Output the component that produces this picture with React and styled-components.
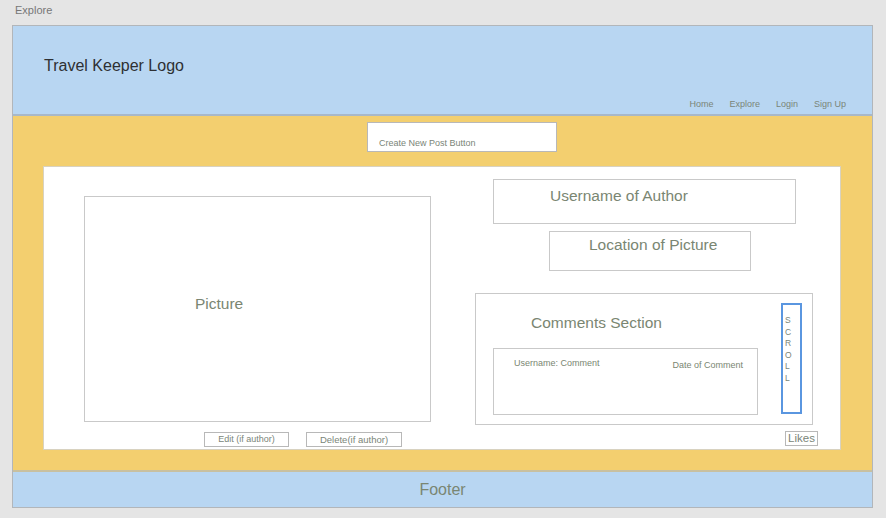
import React from 'react'
import styled, { createGlobalStyle } from 'styled-components'

const Global = createGlobalStyle`
  html, body {
    margin: 0;
    padding: 0;
    background: #e5e5e5;
    font-family: "Liberation Sans", Arial, sans-serif;
  }
`

const Page = styled.div`
  width: 886px;
  height: 518px;
  box-sizing: border-box;
  padding: 4px 13px 0 12px;
  display: flex;
  flex-direction: column;
`

const PageLabel = styled.div`
  font-size: 11px;
  color: #777;
  height: 21px;
  line-height: 12px;
  padding-left: 3px;
`

const Frame = styled.div`
  display: flex;
  flex-direction: column;
  border: 1px solid #b2b6ba;
  height: 483px;
  box-sizing: border-box;
`

const Header = styled.div`
  height: 90px;
  flex-shrink: 0;
  background: #b8d6f2;
  border-bottom: 2px solid #a8b8c8;
  box-sizing: border-box;
  display: flex;
  flex-direction: column;
  justify-content: space-between;
  padding: 31px 26px 5px 31px;
`

const Logo = styled.div`
  font-size: 16px;
  color: #2e3033;
`

const Nav = styled.nav`
  display: flex;
  justify-content: flex-end;
  gap: 16px;
`

const NavLink = styled.a`
  font-size: 9px;
  color: #7a8578;
  text-decoration: none;
`

const Main = styled.div`
  flex: 1;
  background: #f3cf6f;
  display: flex;
  flex-direction: column;
  padding: 6px 31px 20px 30px;
`

const CreateButton = styled.div`
  width: 190px;
  height: 30px;
  box-sizing: border-box;
  margin-left: 324px;
  background: #fff;
  border: 1px solid #b8b8b8;
  font-size: 9px;
  color: #7a8578;
  padding: 15px 0 0 11px;
`

const Card = styled.div`
  margin-top: 14px;
  height: 284px;
  box-sizing: border-box;
  background: #fff;
  border: 1px solid #d8d2c0;
  display: flex;
`

const LeftColumn = styled.div`
  width: 432px;
  box-sizing: border-box;
  padding: 29px 0 0 40px;
  display: flex;
  flex-direction: column;
`

const Box = styled.div`
  box-sizing: border-box;
  width: ${({ w }) => w}px;
  height: ${({ h }) => h}px;
  border: 1px solid #c9c9c9;
  background: #fff;
`

const Label = styled.div`
  font-size: ${({ size = 15.5 }) => size}px;
  color: #7a8672;
  padding: ${({ pad = '0' }) => pad};
`

const PictureBox = styled(Box)`
  display: flex;
  align-items: center;
`

const ButtonRow = styled.div`
  display: flex;
  gap: 17px;
  margin: 10px 0 0 120px;
`

const SmallButton = styled.div`
  box-sizing: border-box;
  width: ${({ w }) => w}px;
  height: 15px;
  border: 1px solid #b8b8b8;
  font-size: ${({ size = 9 }) => size}px;
  color: #7a8578;
  text-align: center;
  line-height: ${({ lh = 12 }) => lh}px;
`

const RightColumn = styled.div`
  flex: 1;
  display: flex;
  flex-direction: column;
  padding-top: 12px;
`

const Offset = styled.div`
  margin: ${({ m }) => m};
`

const CommentsBox = styled(Box)`
  display: flex;
  justify-content: space-between;
  padding: 9px 10px 0 17px;
`

const CommentsMain = styled.div`
  display: flex;
  flex-direction: column;
`

const CommentItem = styled(Box)`
  display: flex;
  justify-content: space-between;
  margin-top: 16px;
  padding: 9px 14px 0 20px;
`

const Scroll = styled.div`
  box-sizing: border-box;
  width: 21px;
  height: 111px;
  border: 2px solid #5a96e0;
  padding: 10px 0 0 2px;
  font-size: 8.5px;
  line-height: 11.5px;
  color: #7a8578;
  display: flex;
  flex-direction: column;
`

const Likes = styled.div`
  box-sizing: border-box;
  width: 33px;
  height: 15px;
  border: 1px solid #b8b8b8;
  font-size: 11.5px;
  color: #7a8578;
  text-align: center;
  line-height: 13px;
  margin: 6px 0 0 309px;
`

const Footer = styled.div`
  height: 37px;
  flex-shrink: 0;
  background: #b8d6f2;
  border-top: 2px solid #c8c0a0;
  box-sizing: border-box;
  display: flex;
  align-items: center;
  justify-content: center;
  font-size: 16px;
  color: #7a8672;
`

export default function App() {
  return (
    <>
      <Global />
      <Page>
        <PageLabel>Explore</PageLabel>
        <Frame>
          <Header>
            <Logo>Travel Keeper Logo</Logo>
            <Nav>
              <NavLink>Home</NavLink>
              <NavLink>Explore</NavLink>
              <NavLink>Login</NavLink>
              <NavLink>Sign Up</NavLink>
            </Nav>
          </Header>
          <Main>
            <CreateButton>Create New Post Button</CreateButton>
            <Card>
              <LeftColumn>
                <PictureBox w={347} h={226}>
                  <Label pad="0 0 11px 110px">Picture</Label>
                </PictureBox>
                <ButtonRow>
                  <SmallButton w={85}>Edit (if author)</SmallButton>
                  <SmallButton w={96} size={9.5} lh={14}>Delete(if author)</SmallButton>
                </ButtonRow>
              </LeftColumn>
              <RightColumn>
                <Offset m="0 0 0 17px">
                  <Box w={303} h={45}>
                    <Label pad="7px 0 0 56px">Username of Author</Label>
                  </Box>
                </Offset>
                <Offset m="7px 0 0 73px">
                  <Box w={202} h={40}>
                    <Label pad="4px 0 0 39px">Location of Picture</Label>
                  </Box>
                </Offset>
                <Offset m="22px 0 0 -1px">
                  <CommentsBox w={338} h={132}>
                    <CommentsMain>
                      <Label pad="11px 0 0 38px">Comments Section</Label>
                      <CommentItem w={265} h={67}>
                        <Label size={9}>Username: Comment</Label>
                        <Label size={9} pad="2px 0 0 0">Date of Comment</Label>
                      </CommentItem>
                    </CommentsMain>
                    <Scroll>
                      {'SCROLL'.split('').map((c, i) => (
                        <span key={i}>{c}</span>
                      ))}
                    </Scroll>
                  </CommentsBox>
                </Offset>
                <Likes>Likes</Likes>
              </RightColumn>
            </Card>
          </Main>
          <Footer>Footer</Footer>
        </Frame>
      </Page>
    </>
  )
}
